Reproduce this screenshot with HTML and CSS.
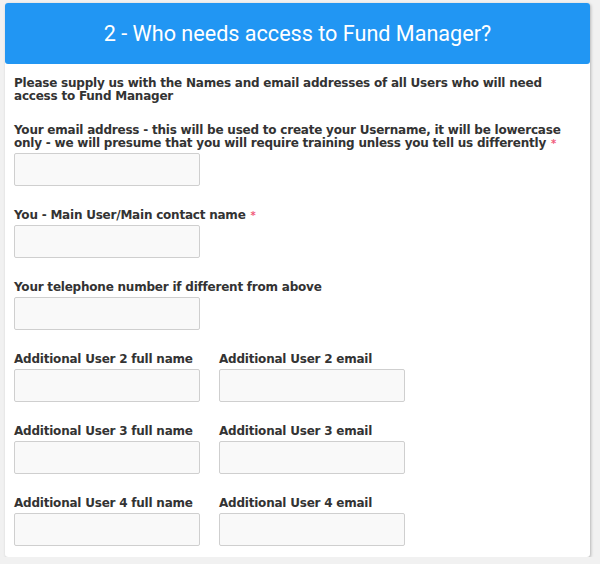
FILE: index.html
```html
<!DOCTYPE html>
<html>
<head>
<meta charset="utf-8">
<link rel="stylesheet" href="styles.css">
</head>
<body>
<div class="card">
  <div class="header">2 - Who needs access to Fund Manager?</div>
  <div class="body">
    <p class="intro">Please supply us with the Names and email addresses of all Users who will need access to Fund Manager</p>
    <div class="field">
      <label class="label">Your email address - this will be used to create your Username, it will be lowercase only - we will presume that you will require training unless you tell us differently<span class="req">*</span></label>
      <div class="input"></div>
    </div>
    <div class="field">
      <label class="label">You - Main User/Main contact name<span class="req">*</span></label>
      <div class="input"></div>
    </div>
    <div class="field">
      <label class="label">Your telephone number if different from above</label>
      <div class="input"></div>
    </div>
    <div class="row">
      <div class="field">
        <label class="label">Additional User 2 full name</label>
        <div class="input"></div>
      </div>
      <div class="field">
        <label class="label">Additional User 2 email</label>
        <div class="input"></div>
      </div>
    </div>
    <div class="row">
      <div class="field">
        <label class="label">Additional User 3 full name</label>
        <div class="input"></div>
      </div>
      <div class="field">
        <label class="label">Additional User 3 email</label>
        <div class="input"></div>
      </div>
    </div>
    <div class="row">
      <div class="field">
        <label class="label">Additional User 4 full name</label>
        <div class="input"></div>
      </div>
      <div class="field">
        <label class="label">Additional User 4 email</label>
        <div class="input"></div>
      </div>
    </div>
  </div>
</div>
</body>
</html>
```
FILE: styles.css
```css
html, body {
  margin: 0;
  padding: 0;
  background: #f1f1f1;
}
body {
  padding: 3px 10px 0 5px;
  font-family: "DejaVu Sans", Verdana, sans-serif;
}
.card {
  width: 585px;
  height: 554px;
  background: #fff;
  border-radius: 3px;
  box-shadow: 1px 1px 3px rgba(0, 0, 0, 0.25);
  box-sizing: border-box;
}
.header {
  height: 61px;
  background: #2196f3;
  border-radius: 3px;
  color: #fff;
  font-family: Roboto, sans-serif;
  font-size: 21.6px;
  display: flex;
  align-items: center;
  justify-content: center;
}
.body {
  padding: 13px 9px 0 9px;
  color: #333;
  font-size: 12px;
  font-weight: bold;
  line-height: 13px;
  letter-spacing: -0.22px;
}
.intro {
  margin: 0 0 21px 0;
}
.field {
  display: flex;
  flex-direction: column;
  margin-bottom: 23px;
}
.label {
  display: block;
  margin-bottom: 3px;
}
.req {
  color: #f05a7a;
  font-size: 10px;
  letter-spacing: 0;
  margin-left: 5px;
}
.input {
  width: 186px;
  height: 33px;
  box-sizing: border-box;
  background: #f9f9f9;
  border: 1px solid #cfcfcf;
  border-radius: 2px;
}
.row {
  display: grid;
  grid-template-columns: 186px 186px;
  column-gap: 19px;
}
```
